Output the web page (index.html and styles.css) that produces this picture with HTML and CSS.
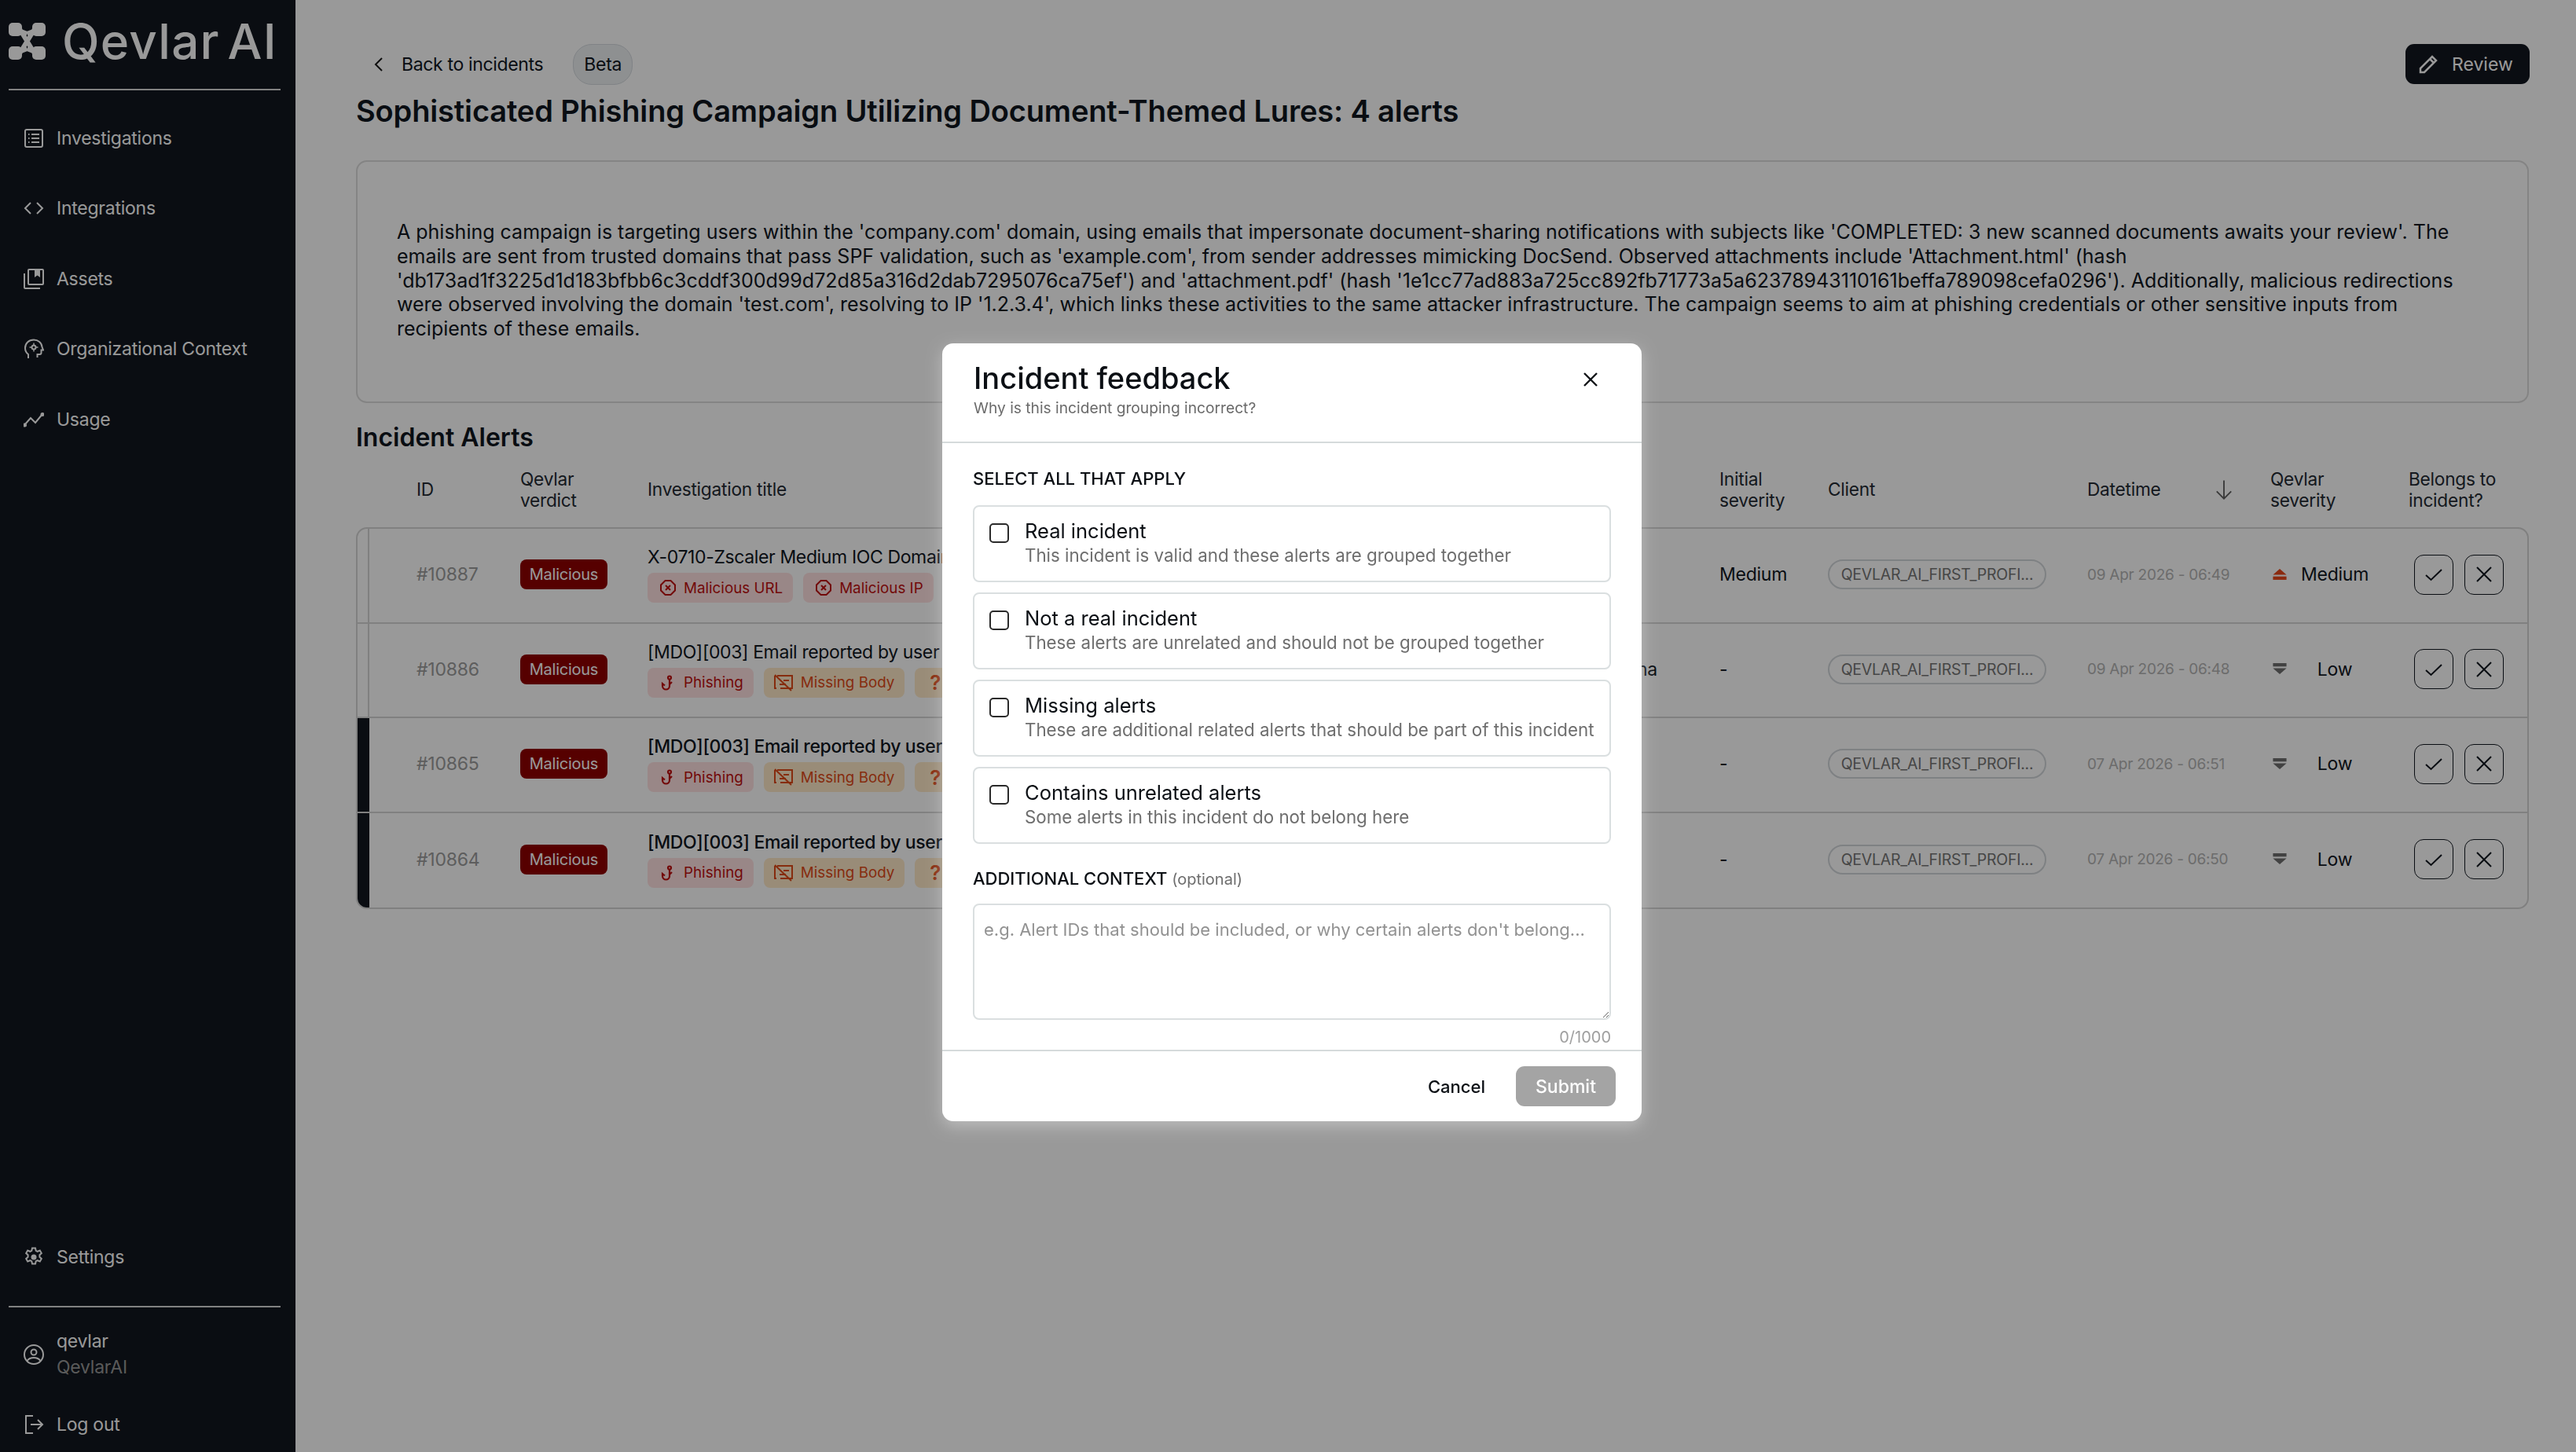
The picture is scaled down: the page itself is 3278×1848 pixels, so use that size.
FILE: index.html
```html
<!DOCTYPE html>
<html lang="en">
<head>
    <meta charset="UTF-8">
    <title>Qevlar AI - Incident</title>
    <link rel="stylesheet" href="styles.css">
</head>
<body>
    <aside class="sidebar">
        <div class="logo">
            <svg class="logo-mark" viewBox="0 0 47 47" fill="#fff"><path d="M23.500 14 8 8M23.500 14 39 8M23.500 33 8 39M23.500 33 39 39M14 8l19 31M33 8 14 39" stroke="#fff" stroke-width="6"/><rect x="0" y="0" width="17" height="17" rx="5"/><rect x="30" y="0" width="17" height="17" rx="5"/><rect x="0" y="30" width="17" height="17" rx="5"/><rect x="30" y="30" width="17" height="17" rx="5"/></svg>
            <span class="logo-text">Qevlar AI</span>
        </div>
        <nav class="nav">
            <a class="nav-item"><svg class="nav-icon" viewBox="0 0 26 26" fill="none" stroke="currentColor" stroke-width="2"><rect x="2" y="2" width="22" height="22" rx="2"/><path d="M10 8h10M10 13h10M10 18h10M6 8h1.500M6 13h1.500M6 18h1.500"/></svg>Investigations</a>
            <a class="nav-item"><svg class="nav-icon" viewBox="0 0 26 26" fill="none" stroke="currentColor" stroke-width="2"><path d="M9 6 2 13l7 7M17 6l7 7-7 7"/></svg>Integrations</a>
            <a class="nav-item"><svg class="nav-icon" viewBox="0 0 26 26" fill="none" stroke="currentColor" stroke-width="2"><path d="M1 6v18a1 1 0 0 0 1 1h19"/><rect x="6" y="1" width="19" height="19" rx="1"/><path d="M14 1h7v10l-3.500-2.500L14 11z" fill="currentColor" stroke="none"/></svg>Assets</a>
            <a class="nav-item"><svg class="nav-icon" viewBox="0 0 26 26" fill="none" stroke="currentColor" stroke-width="2"><path d="M6 25v-5c-2.500-2-4-4.500-4-8C2 6 6.500 1.500 13 1.500c5.500 0 10 3.500 10.500 9l1.500 4h-2.500V18a2 2 0 0 1-2 2h-3v4"/><circle cx="13" cy="11" r="2.500"/><path d="M13 5.500v3M13 13.500v3M7.500 11h3M15.500 11h3" stroke-width="1.500"/></svg>Organizational Context</a>
            <a class="nav-item"><svg class="nav-icon" viewBox="0 0 26 26" fill="none" stroke="currentColor" stroke-width="2"><path d="M1 20 9 11l6 6 9-11"/><circle cx="1.500" cy="20" r="1.500" fill="currentColor"/><circle cx="24" cy="6.500" r="1.500" fill="currentColor"/></svg>Usage</a>
        </nav>
        <div class="sidebar-bottom">
            <a class="nav-item"><svg class="nav-icon" viewBox="0 0 26 26" fill="none" stroke="currentColor" stroke-width="2"><path d="M11 1.500h4l.7 3.300 2 1 3.100-1.200 2 3.400-2.400 2.200v2.600l2.400 2.200-2 3.400-3.100-1.200-2 1-.7 3.300h-4l-.7-3.300-2-1-3.100 1.200-2-3.400 2.400-2.200v-2.600L3.200 8l2-3.400 3.100 1.200 2-1z"/><circle cx="13" cy="13" r="3.500" fill="currentColor" stroke="none"/></svg>Settings</a>
            <div class="sidebar-rule"></div>
            <div class="user-row">
                <svg class="nav-icon" viewBox="0 0 26 26" fill="none" stroke="currentColor" stroke-width="2"><circle cx="13" cy="13" r="12"/><circle cx="13" cy="10" r="3.500"/><path d="M4.500 21c2-3 5-4 8.500-4s6.500 1 8.500 4"/></svg>
                <div>
                    <div class="user-name">qevlar</div>
                    <div class="user-org">QevlarAI</div>
                </div>
            </div>
            <a class="nav-item nav-logout"><svg class="nav-icon" viewBox="0 0 26 26" fill="none" stroke="currentColor" stroke-width="2"><path d="M12 2H3v22h9M9 13h15M18 7l6 6-6 6"/></svg>Log out</a>
        </div>
    </aside>

    <main class="main">
        <div class="topbar">
            <div class="back-row">
                <svg class="back-icon" viewBox="0 0 12 20" fill="none" stroke="#1a1a1a" stroke-width="2"><path d="M10 2 2 10l8 8"/></svg>
                <span class="back-link">Back to incidents</span>
                <span class="beta">Beta</span>
            </div>
            <button class="review-btn"><svg class="review-icon" viewBox="0 0 24 24" fill="none" stroke="currentColor" stroke-width="2.500"><path d="M2 22v-5L17 2l5 5L7 22z"/><path d="M14 5l5 5"/></svg>Review</button>
        </div>
        <h1 class="page-title">Sophisticated Phishing Campaign Utilizing Document-Themed Lures: 4 alerts</h1>

        <section class="summary">
            <p>A phishing campaign is targeting users within the 'company.com' domain, using emails that impersonate document-sharing notifications with subjects like 'COMPLETED: 3 new scanned documents awaits your review'. The<br>
            emails are sent from trusted domains that pass SPF validation, such as 'example.com', from sender addresses mimicking DocSend. Observed attachments include 'Attachment.html' (hash<br>
            'db173ad1f3225d1d183bfbb6c3cddf300d99d72d85a316d2dab7295076ca75ef') and 'attachment.pdf' (hash '1e1cc77ad883a725cc892fb71773a5a62378943110161beffa789098cefa0296'). Additionally, malicious redirections<br>
            were observed involving the domain 'test.com', resolving to IP '1.2.3.4', which links these activities to the same attacker infrastructure. The campaign seems to aim at phishing credentials or other sensitive inputs from<br>
            recipients of these emails.</p>
        </section>

        <h2 class="section-title">Incident Alerts</h2>

        <div class="table-head">
            <div></div>
            <div></div>
            <div>ID</div>
            <div>Qevlar<br>verdict</div>
            <div>Investigation title</div>
            <div></div>
            <div>Initial<br>severity</div>
            <div>Client</div>
            <div class="head-date">Datetime <svg class="sort-icon" viewBox="0 0 26 28" fill="none" stroke="#5f5f5f" stroke-width="2"><path d="M13 1v25M3 16l10 10 10-10"/></svg></div>
            <div>Qevlar<br>severity</div>
            <div>Belongs to<br>incident?</div>
        </div>

        <div class="table-body">
            <div class="row">
                <div class="bar"></div>
                <div></div>
                <div class="cell-id">#10887</div>
                <div><span class="verdict">Malicious</span></div>
                <div class="cell-title">
                    <div class="alert-name">X-0710-Zscaler Medium IOC Domain</div>
                    <div class="tags">
                        <span class="tag tag-red"><svg class="tag-icon" viewBox="0 0 20 20" fill="none" stroke="currentColor" stroke-width="2"><path d="M6.500 1h7L19 6.500v7L13.500 19h-7L1 13.500v-7z"/><path d="m7 7 6 6M13 7l-6 6"/></svg>Malicious URL</span>
                        <span class="tag tag-red"><svg class="tag-icon" viewBox="0 0 20 20" fill="none" stroke="currentColor" stroke-width="2"><path d="M6.500 1h7L19 6.500v7L13.500 19h-7L1 13.500v-7z"/><path d="m7 7 6 6M13 7l-6 6"/></svg>Malicious IP</span>
                    </div>
                </div>
                <div></div>
                <div class="cell-text">Medium</div>
                <div><span class="client">QEVLAR_AI_FIRST_PROFI...</span></div>
                <div class="cell-date">09 Apr 2026 - 06:49</div>
                <div class="cell-sev"><svg class="sev-icon sev-medium" viewBox="0 0 16 14" fill="currentColor"><path d="M8 0l8 7H0z"/><rect y="9" width="16" height="4"/></svg><span class="sev-text">Medium</span></div>
                <div class="cell-actions">
                    <button class="icon-btn"><svg viewBox="0 0 24 24" fill="none" stroke="#10161e" stroke-width="2"><path d="m2 13 6.500 6L22 6"/></svg></button>
                    <button class="icon-btn"><svg viewBox="0 0 24 24" fill="none" stroke="#10161e" stroke-width="2"><path d="m3 3 18 18M21 3 3 21"/></svg></button>
                </div>
            </div>

            <div class="row">
                <div class="bar"></div>
                <div></div>
                <div class="cell-id">#10886</div>
                <div><span class="verdict">Malicious</span></div>
                <div class="cell-title">
                    <div class="alert-name">[MDO][003] Email reported by user</div>
                    <div class="tags">
                        <span class="tag tag-red"><svg class="tag-icon" viewBox="0 0 20 20" fill="none" stroke="currentColor" stroke-width="2.200"><path d="M12 6v8a4.500 4.500 0 0 1-9 0v-3l3 2.500M15 9l-3 3"/><circle cx="12" cy="3.500" r="2"/></svg>Phishing</span>
                        <span class="tag tag-orange"><svg class="tag-icon tag-icon-wide" viewBox="0 0 24 22" fill="none" stroke="currentColor" stroke-width="2"><path d="M4 2h19v16H8M1 2v16h2"/><path d="M12 8h7M7 13h8M1 1l21 20"/></svg>Missing Body</span>
                        <span class="tag tag-orange tag-q">?</span>
                    </div>
                </div>
                <div class="cell-text cell-other">na</div>
                <div class="cell-text">-</div>
                <div><span class="client">QEVLAR_AI_FIRST_PROFI...</span></div>
                <div class="cell-date">09 Apr 2026 - 06:48</div>
                <div class="cell-sev"><svg class="sev-icon sev-low" viewBox="0 0 16 14" fill="currentColor"><rect y="0" width="16" height="4"/><path d="M0 6h16l-8 7z"/></svg><span class="sev-text">Low</span></div>
                <div class="cell-actions">
                    <button class="icon-btn"><svg viewBox="0 0 24 24" fill="none" stroke="#10161e" stroke-width="2"><path d="m2 13 6.500 6L22 6"/></svg></button>
                    <button class="icon-btn"><svg viewBox="0 0 24 24" fill="none" stroke="#10161e" stroke-width="2"><path d="m3 3 18 18M21 3 3 21"/></svg></button>
                </div>
            </div>

            <div class="row row-new">
                <div class="bar"></div>
                <div></div>
                <div class="cell-id">#10865</div>
                <div><span class="verdict">Malicious</span></div>
                <div class="cell-title">
                    <div class="alert-name">[MDO][003] Email reported by user</div>
                    <div class="tags">
                        <span class="tag tag-red"><svg class="tag-icon" viewBox="0 0 20 20" fill="none" stroke="currentColor" stroke-width="2.200"><path d="M12 6v8a4.500 4.500 0 0 1-9 0v-3l3 2.500M15 9l-3 3"/><circle cx="12" cy="3.500" r="2"/></svg>Phishing</span>
                        <span class="tag tag-orange"><svg class="tag-icon tag-icon-wide" viewBox="0 0 24 22" fill="none" stroke="currentColor" stroke-width="2"><path d="M4 2h19v16H8M1 2v16h2"/><path d="M12 8h7M7 13h8M1 1l21 20"/></svg>Missing Body</span>
                        <span class="tag tag-orange tag-q">?</span>
                    </div>
                </div>
                <div></div>
                <div class="cell-text">-</div>
                <div><span class="client">QEVLAR_AI_FIRST_PROFI...</span></div>
                <div class="cell-date">07 Apr 2026 - 06:51</div>
                <div class="cell-sev"><svg class="sev-icon sev-low" viewBox="0 0 16 14" fill="currentColor"><rect y="0" width="16" height="4"/><path d="M0 6h16l-8 7z"/></svg><span class="sev-text">Low</span></div>
                <div class="cell-actions">
                    <button class="icon-btn"><svg viewBox="0 0 24 24" fill="none" stroke="#10161e" stroke-width="2"><path d="m2 13 6.500 6L22 6"/></svg></button>
                    <button class="icon-btn"><svg viewBox="0 0 24 24" fill="none" stroke="#10161e" stroke-width="2"><path d="m3 3 18 18M21 3 3 21"/></svg></button>
                </div>
            </div>

            <div class="row row-new">
                <div class="bar"></div>
                <div></div>
                <div class="cell-id">#10864</div>
                <div><span class="verdict">Malicious</span></div>
                <div class="cell-title">
                    <div class="alert-name">[MDO][003] Email reported by user</div>
                    <div class="tags">
                        <span class="tag tag-red"><svg class="tag-icon" viewBox="0 0 20 20" fill="none" stroke="currentColor" stroke-width="2.200"><path d="M12 6v8a4.500 4.500 0 0 1-9 0v-3l3 2.500M15 9l-3 3"/><circle cx="12" cy="3.500" r="2"/></svg>Phishing</span>
                        <span class="tag tag-orange"><svg class="tag-icon tag-icon-wide" viewBox="0 0 24 22" fill="none" stroke="currentColor" stroke-width="2"><path d="M4 2h19v16H8M1 2v16h2"/><path d="M12 8h7M7 13h8M1 1l21 20"/></svg>Missing Body</span>
                        <span class="tag tag-orange tag-q">?</span>
                    </div>
                </div>
                <div></div>
                <div class="cell-text">-</div>
                <div><span class="client">QEVLAR_AI_FIRST_PROFI...</span></div>
                <div class="cell-date">07 Apr 2026 - 06:50</div>
                <div class="cell-sev"><svg class="sev-icon sev-low" viewBox="0 0 16 14" fill="currentColor"><rect y="0" width="16" height="4"/><path d="M0 6h16l-8 7z"/></svg><span class="sev-text">Low</span></div>
                <div class="cell-actions">
                    <button class="icon-btn"><svg viewBox="0 0 24 24" fill="none" stroke="#10161e" stroke-width="2"><path d="m2 13 6.500 6L22 6"/></svg></button>
                    <button class="icon-btn"><svg viewBox="0 0 24 24" fill="none" stroke="#10161e" stroke-width="2"><path d="m3 3 18 18M21 3 3 21"/></svg></button>
                </div>
            </div>
        </div>
    </main>

    <div class="overlay"></div>

    <div class="modal">
        <header class="modal-header">
            <div>
                <div class="modal-title">Incident feedback</div>
                <div class="modal-sub">Why is this incident grouping incorrect?</div>
            </div>
            <svg class="modal-close" viewBox="0 0 20 20" fill="none" stroke="#0b0f14" stroke-width="2.400"><path d="m2 2 16 16M18 2 2 18"/></svg>
        </header>
        <div class="modal-body">
            <div class="field-label">SELECT ALL THAT APPLY</div>
            <div class="options">
                <label class="option">
                    <input type="checkbox">
                    <span><span class="option-title">Real incident</span><span class="option-desc">This incident is valid and these alerts are grouped together</span></span>
                </label>
                <label class="option">
                    <input type="checkbox">
                    <span><span class="option-title">Not a real incident</span><span class="option-desc">These alerts are unrelated and should not be grouped together</span></span>
                </label>
                <label class="option">
                    <input type="checkbox">
                    <span><span class="option-title">Missing alerts</span><span class="option-desc">These are additional related alerts that should be part of this incident</span></span>
                </label>
                <label class="option">
                    <input type="checkbox">
                    <span><span class="option-title">Contains unrelated alerts</span><span class="option-desc">Some alerts in this incident do not belong here</span></span>
                </label>
            </div>
            <div class="field-label context-label">ADDITIONAL CONTEXT <span class="optional">(optional)</span></div>
            <textarea class="context-input" placeholder="e.g. Alert IDs that should be included, or why certain alerts don't belong..."></textarea>
            <div class="counter">0/1000</div>
        </div>
        <footer class="modal-footer">
            <button class="cancel-btn">Cancel</button>
            <button class="submit-btn">Submit</button>
        </footer>
    </div>
</body>
</html>
```
FILE: styles.css
```css
* {
    box-sizing: border-box;
}
body {
    margin: 0;
    height: 100vh;
    overflow: hidden;
    display: flex;
    font-family: Inter, "Liberation Sans", sans-serif;
    font-size: 23px;
    letter-spacing: -0.25px;
    color: #10161e;
    background: #fff;
}
button {
    font-family: inherit;
    cursor: pointer;
}

/* sidebar */
.sidebar {
    width: 376px;
    flex-shrink: 0;
    display: flex;
    flex-direction: column;
    padding: 0 19px 5px 11px;
    background: #11161e;
    color: #fff;
}
.logo {
    height: 115px;
    flex-shrink: 0;
    display: flex;
    align-items: flex-start;
    gap: 21px;
    padding-top: 29px;
    border-bottom: 2px solid #d8d8d8;
}
.logo-mark {
    width: 47px;
    height: 47px;
}
.logo-text {
    font-size: 62px;
    line-height: 47px;
    font-weight: 500;
    letter-spacing: 1.2px;
    word-spacing: -8px;
    white-space: nowrap;
}
.nav {
    padding-top: 16px;
}
.nav-item {
    height: 89.5px;
    display: flex;
    align-items: center;
    gap: 16px;
    padding-left: 19px;
}
.nav-icon {
    width: 26px;
    height: 26px;
    flex-shrink: 0;
}
.sidebar-bottom {
    margin-top: auto;
}
.sidebar-rule {
    height: 2px;
    margin-top: 17px;
    background: #d8d8d8;
}
.user-row {
    height: 119px;
    display: flex;
    align-items: center;
    gap: 16px;
    padding-left: 19px;
}
.user-name {
    line-height: 33px;
}
.user-org {
    line-height: 33px;
    color: #969696;
}
.nav-logout {
    height: 60px;
}

/* main column */
.main {
    flex: 1;
    min-width: 0;
    padding: 56px 60px 0 77px;
}
.topbar {
    display: flex;
    justify-content: space-between;
    height: 51px;
}
.back-row {
    display: flex;
    align-items: center;
    padding-left: 23px;
}
.back-icon {
    width: 12px;
    height: 20px;
    margin-right: 23px;
}
.back-link {
    letter-spacing: -0.35px;
}
.beta {
    width: 76px;
    height: 52px;
    margin-left: 38px;
    display: flex;
    align-items: center;
    justify-content: center;
    border: 1px solid #d5dadf;
    border-radius: 24px;
    background: #edf0f2;
}
.review-btn {
    width: 158px;
    height: 51px;
    margin-right: -1px;
    display: flex;
    align-items: center;
    gap: 18px;
    padding-left: 17px;
    border: none;
    border-radius: 11px;
    background: #11161e;
    color: #fff;
    font-size: 23px;
}
.review-icon {
    width: 24px;
    height: 24px;
}
.page-title {
    margin: 11px 0 0;
    font-size: 38px;
    line-height: 46px;
    font-weight: 600;
    letter-spacing: -0.14px;
    white-space: nowrap;
}
.summary {
    height: 309px;
    margin-top: 40px;
    padding: 74px 50px 0;
    border: 2px solid #dcdcdc;
    border-radius: 14px;
}
.summary p {
    margin: 0;
    font-size: 25px;
    line-height: 30.8px;
    letter-spacing: 0;
    white-space: nowrap;
}
.section-title {
    margin: 24px 0 0;
    font-size: 32px;
    line-height: 40px;
    font-weight: 600;
    letter-spacing: 0;
}

/* alerts table */
.table-head,
.row {
    display: grid;
    grid-template-columns: 15px 60px 132px 162px 1259px 105px 138px 330px 233px 176px 1fr;
    align-items: center;
}
.table-head {
    height: 94px;
    padding: 0 0 2px 2px;
    font-size: 22.7px;
    line-height: 27.5px;
    color: #232a33;
}
.head-date {
    display: flex;
    align-items: center;
    justify-content: space-between;
    padding-right: 47px;
}
.sort-icon {
    width: 24px;
    height: 27px;
}
.table-body {
    border: 2px solid #d5d5d5;
    border-radius: 14px;
    overflow: hidden;
}
.row {
    height: 120.5px;
    padding-bottom: 2px;
    border-bottom: 2px solid #d5d5d5;
}
.row:last-child {
    border-bottom: none;
}
.bar {
    align-self: stretch;
    margin-bottom: -2px;
    border-right: 2px solid #d5d5d5;
}
.row-new .bar {
    background: #11161e;
    border-right: none;
}
.cell-id {
    color: #9c9c9c;
    font-size: 23px;
}
.verdict {
    width: 111px;
    height: 38px;
    display: flex;
    align-items: center;
    justify-content: center;
    border-radius: 8px;
    background: #900000;
    color: #fff;
    font-size: 20px;
}
.cell-title {
    display: flex;
    flex-direction: column;
    gap: 6px;
}
.alert-name {
    line-height: 28px;
    letter-spacing: -0.37px;
    white-space: nowrap;
}
.row-new .alert-name {
    font-weight: 500;
}
.tags {
    display: flex;
    gap: 13px;
}
.tag {
    height: 38px;
    display: flex;
    align-items: center;
    gap: 10px;
    padding: 0 13px 0 16px;
    border-radius: 8px;
    font-size: 18.8px;
    letter-spacing: 0;
    white-space: nowrap;
}
.tag-red {
    background: #ffe1e1;
    color: #bf1010;
}
.tag-orange {
    background: #ffe9c8;
    color: #e04a18;
}
.tag-q {
    font-size: 26px;
    font-weight: 600;
    padding: 0 30px 0 19px;
}
.tag-icon {
    width: 20px;
    height: 20px;
}
.tag-icon-wide {
    width: 24px;
    height: 22px;
    margin-left: -3px;
}
.cell-other {
    white-space: nowrap;
}
.client {
    width: 278px;
    height: 38px;
    display: flex;
    align-items: center;
    justify-content: center;
    border: 2px solid #d3d7db;
    border-radius: 19px;
    color: #757575;
    font-size: 19.5px;
    white-space: nowrap;
}
.cell-date {
    color: #b4b4b4;
    font-size: 19px;
}
.cell-sev {
    display: flex;
    align-items: center;
    padding-left: 3px;
}
.sev-icon {
    width: 18px;
    height: 15px;
    flex-shrink: 0;
}
.sev-medium {
    color: #e8461a;
}
.sev-low {
    color: #6e6e6e;
}
.sev-text {
    width: 122px;
    text-align: center;
}
.cell-actions {
    display: flex;
    gap: 14px;
    padding-left: 7px;
}
.icon-btn {
    width: 50px;
    height: 51px;
    display: flex;
    align-items: center;
    justify-content: center;
    padding: 0;
    border: 1.500px solid #10161e;
    border-radius: 12px;
    background: transparent;
}
.icon-btn svg {
    width: 24px;
    height: 24px;
}

/* dialog */
.overlay {
    position: fixed;
    inset: 0;
    background: rgba(0, 0, 0, 0.4);
}
.modal {
    position: fixed;
    left: 1199px;
    top: 437px;
    width: 890px;
    height: 990px;
    display: flex;
    flex-direction: column;
    border-radius: 14px;
    background: #fff;
    color: #0b0f14;
    letter-spacing: 0;
    box-shadow: 0 6px 20px rgba(255, 255, 255, 0.35);
}
.modal-header {
    height: 127px;
    flex-shrink: 0;
    display: flex;
    justify-content: space-between;
    align-items: flex-start;
    padding: 19px 55px 0 40px;
    border-bottom: 2px solid #d5dadb;
}
.modal-title {
    font-size: 38px;
    line-height: 50px;
    font-weight: 500;
}
.modal-sub {
    font-size: 19.2px;
    line-height: 26px;
    color: #6b6b6b;
}
.modal-close {
    width: 20px;
    height: 20px;
    margin-top: 17px;
}
.modal-body {
    flex: 1;
    padding: 31px 39px 0;
}
.field-label {
    font-size: 22px;
    line-height: 28px;
    font-weight: 500;
    white-space: nowrap;
}
.options {
    display: flex;
    flex-direction: column;
    gap: 13px;
    margin-top: 20px;
}
.option {
    height: 98px;
    display: flex;
    gap: 20px;
    padding: 16px 10px 0 19px;
    border: 2px solid #dadfe0;
    border-radius: 8px;
}
.option input {
    appearance: none;
    width: 25px;
    height: 25px;
    margin: 5px 0 0;
    flex-shrink: 0;
    border: 2px solid #2a2a2a;
    border-radius: 5px;
    background: #fff;
}
.option-title {
    display: block;
    font-size: 25.5px;
    line-height: 30px;
}
.option-desc {
    display: block;
    margin-top: 3px;
    font-size: 22.3px;
    line-height: 26px;
    color: #6e6e6e;
    white-space: nowrap;
}
.context-label {
    margin-top: 30px;
}
.optional {
    font-size: 20px;
    font-weight: 400;
    color: #6e6e6e;
}
.context-input {
    display: block;
    width: 100%;
    height: 148px;
    margin-top: 17px;
    padding: 18px 12px;
    border: 2px solid #dadfe0;
    border-radius: 8px;
    font-family: inherit;
    font-size: 22px;
    line-height: 26px;
    resize: vertical;
}
.context-input::placeholder {
    color: #929292;
}
.counter {
    margin-top: 10px;
    font-size: 20px;
    line-height: 24px;
    text-align: right;
    color: #a0a0a0;
}
.modal-footer {
    height: 91px;
    flex-shrink: 0;
    display: flex;
    align-items: center;
    justify-content: flex-end;
    gap: 39px;
    padding-right: 33px;
    border-top: 2px solid #d5dadb;
}
.cancel-btn {
    padding: 0;
    border: none;
    background: none;
    color: #0b0f14;
    font-size: 22px;
    font-weight: 500;
}
.submit-btn {
    width: 127px;
    height: 51px;
    border: none;
    border-radius: 11px;
    background: #a4a4a4;
    color: #fff;
    font-size: 23px;
    font-weight: 500;
}
```
